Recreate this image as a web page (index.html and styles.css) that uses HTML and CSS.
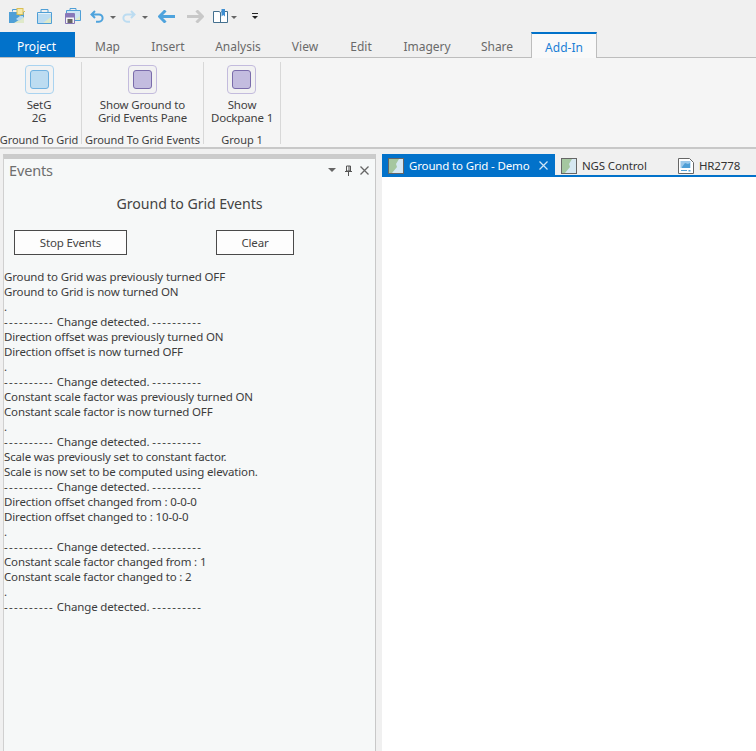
FILE: index.html
```html
<!DOCTYPE html>
<html lang="en">
<head>
<meta charset="utf-8">
<title>Ground to Grid Events</title>
<link rel="stylesheet" href="styles.css">
</head>
<body>
<div class="app">
  <div class="qat">
    <svg class="qi" width="16" height="16" viewBox="0 0 16 16"><path d="M3.500 3.500V1.500h5v2" fill="none" stroke="#4f9fd6"/><path d="M0 4h15v11H0z" fill="#4f9fd6"/><path d="M5 15l10-6v6z" fill="#dfe9c9"/><path d="M7 11l4-3 3 0v2l-4 3z" fill="#bcdcf1"/><rect x="8" y="0.500" width="6" height="6" fill="#f7e9a8" stroke="#d9bf55"/><path d="M14.500 3.500h1.500M11 7v1" stroke="#d9bf55"/></svg>
    <svg class="qi q2" width="15" height="15" viewBox="0 0 15 15"><path d="M4 3V.5h7V3" fill="none" stroke="#4f9fd6"/><path d="M.5 3.500h14v11H.5z" fill="#e8f2f8" stroke="#4f9fd6"/><path d="M1 5h13v4l-7 5H1z" fill="#bcdcf1"/><path d="M6 14l8-6v6z" fill="#dfe9c9"/></svg>
    <svg class="qi q3" width="16" height="16" viewBox="0 0 16 16"><path d="M5 2V.5h6V2" fill="none" stroke="#4f9fd6"/><path d="M1.500 2.500h14v10h-14z" fill="#cfe5f3" stroke="#4f9fd6"/><path d="M10 12l5-4v4z" fill="#dfe9c9"/><path d="M.5 5.500h9v10h-9z" fill="#f4f4f4" stroke="#8877b8"/><path d="M1 6h8v3.500H1z" fill="#8877b8"/><path d="M2.500 11h5v4h-5z" fill="#666"/></svg>
    <svg class="qi q4" width="15" height="13" viewBox="0 0 15 13"><path d="M5 1L1.500 4.500 5 8M2 4.500h7a3.600 3.600 0 0 1 0 7.200H6" fill="none" stroke="#4ea3dd" stroke-width="2"/></svg>
    <span class="caret q5"></span>
    <svg class="qi q6" width="15" height="13" viewBox="0 0 15 13"><path d="M10 1l3.500 3.500L10 8M13 4.500H6a3.600 3.600 0 0 0 0 7.200h3" fill="none" stroke="#bcdcf1" stroke-width="2"/></svg>
    <span class="caret q7"></span>
    <svg class="qi q8" width="17" height="13" viewBox="0 0 17 13"><path d="M7.500 .5L1.500 6.500l6 6M2 6.500h15" fill="none" stroke="#4ea3dd" stroke-width="3"/></svg>
    <svg class="qi q9" width="17" height="13" viewBox="0 0 17 13"><path d="M9.500 .5l6 6-6 6M15 6.500H0" fill="none" stroke="#c8c8c8" stroke-width="3"/></svg>
    <svg class="qi q10" width="15" height="14" viewBox="0 0 15 14"><path d="M.5 2.500h5.500l1.500 1 1.500-1h5.500v11H.5z" fill="#fff" stroke="#44708f"/><path d="M7.500 3.500v10" stroke="#44708f"/><path d="M8.500 0h3.500v7.500l-1.750-1.500-1.750 1.500z" fill="#3f8fd2"/></svg>
    <span class="caret q11"></span>
    <span class="more"></span>
  </div>

  <nav class="tabs">
    <span class="tab project">Project</span>
    <span class="tab t-map">Map</span>
    <span class="tab t-insert">Insert</span>
    <span class="tab t-analysis">Analysis</span>
    <span class="tab t-view">View</span>
    <span class="tab t-edit">Edit</span>
    <span class="tab t-imagery">Imagery</span>
    <span class="tab t-share">Share</span>
    <span class="tab addin">Add-In</span>
  </nav>

  <section class="ribbon">
    <div class="group g1">
      <div class="cmd">
        <span class="ico blue"><i></i></span>
        <span class="lbl">SetG<br>2G</span>
      </div>
      <div class="gname">Ground To Grid</div>
    </div>
    <div class="group g2">
      <div class="cmd">
        <span class="ico purple"><i></i></span>
        <span class="lbl">Show Ground to<br>Grid Events Pane</span>
      </div>
      <div class="gname">Ground To Grid Events</div>
    </div>
    <div class="group g3">
      <div class="cmd">
        <span class="ico purple"><i></i></span>
        <span class="lbl">Show<br>Dockpane 1</span>
      </div>
      <div class="gname">Group 1</div>
    </div>
  </section>

  <main class="workspace">
    <aside class="pane">
      <header class="pane-head">
        <span class="pane-title">Events</span>
        <span class="pane-tools">
          <span class="drop"></span>
          <svg width="9" height="11" viewBox="0 0 9 11"><path d="M2.500 1h4v5h-4zM1 6.500h7M4.500 6.500V11M5 1v5" fill="none" stroke="#555"/></svg>
          <svg width="9" height="9" viewBox="0 0 9 9"><path d="M.5.500l8 8M8.500.500l-8 8" stroke="#666" stroke-width="1.300"/></svg>
        </span>
      </header>
      <h1 class="heading">Ground to Grid Events</h1>
      <div class="actions">
        <button class="btn stop">Stop Events</button>
        <button class="btn clear">Clear</button>
      </div>
      <pre class="log">Ground to Grid was previously turned OFF
Ground to Grid is now turned ON
.
<span class="dash">----------</span> Change detected. <span class="dash">----------</span>
Direction offset was previously turned ON
Direction offset is now turned OFF
.
<span class="dash">----------</span> Change detected. <span class="dash">----------</span>
Constant scale factor was previously turned ON
Constant scale factor is now turned OFF
.
<span class="dash">----------</span> Change detected. <span class="dash">----------</span>
Scale was previously set to constant factor.
Scale is now set to be computed using elevation.
<span class="dash">----------</span> Change detected. <span class="dash">----------</span>
Direction offset changed from : 0-0-0
Direction offset changed to : 10-0-0
.
<span class="dash">----------</span> Change detected. <span class="dash">----------</span>
Constant scale factor changed from : 1
Constant scale factor changed to : 2
.
<span class="dash">----------</span> Change detected. <span class="dash">----------</span></pre>
    </aside>
    <section class="doc">
      <div class="doc-tabs">
        <span class="dtab active">
          <svg class="map" width="16" height="16" viewBox="0 0 16 16"><rect x=".5" y=".5" width="15" height="15" fill="#d6e8f2" stroke="#666"/><path d="M1 1h10L8 6l1 3-5 6H1z" fill="#a5c7a0"/></svg>
          <span class="dt-a">Ground to Grid - Demo</span>
          <svg class="dx" width="9" height="9" viewBox="0 0 9 9"><path d="M.5.500l8 8M8.500.500l-8 8" stroke="#cfe6f7" stroke-width="1.200"/></svg>
        </span>
        <span class="dtab second">
          <svg class="map" width="16" height="16" viewBox="0 0 16 16"><rect x=".5" y=".5" width="15" height="15" fill="#d6e8f2" stroke="#666"/><path d="M1 1h10L8 6l1 3-5 6H1z" fill="#a5c7a0"/></svg>
          <span>NGS Control</span>
        </span>
        <span class="dtab third">
          <svg class="map" width="16" height="16" viewBox="0 0 16 16"><path d="M.5.500h11l4 4v11H.5z" fill="#fff" stroke="#666"/><path d="M2.500 3h10v7h-10z" fill="#9cc9ea"/><path d="M4 9l3-4 3 1 2-1v5H4z" fill="#4f9fd6"/><path d="M3 12h6v1H3zM10.500 12h2v1.500h-2z" fill="#4f9fd6"/></svg>
          <span>HR2778</span>
        </span>
      </div>
      <div class="doc-body"></div>
    </section>
  </main>
</div>
</body>
</html>
```
FILE: styles.css
```css
* { box-sizing: border-box; }
html, body { margin: 0; height: 100%; }
body { background: #f0f0f0; font-family: "Noto Sans", "Open Sans", sans-serif; font-size: 11.5px; letter-spacing: -0.15px; color: #3c3c3c; overflow: hidden; }
.app { width: 756px; height: 751px; display: flex; flex-direction: column; }

.qat { height: 32px; display: flex; align-items: center; padding: 0 0 0 9px; flex: none; }
.qi { display: block; flex: none; }
.q2 { margin-left: 12px; }
.q3 { margin-left: 13px; }
.q4 { margin-left: 9px; }
.q5 { margin-left: 5px; }
.q6 { margin-left: 5px; }
.q7 { margin-left: 6px; }
.q8 { margin-left: 10px; }
.q9 { margin-left: 12px; }
.q10 { margin-left: 9px; }
.q11 { margin-left: 3px; }
.caret { width: 0; height: 0; border: 3px solid transparent; border-top: 3px solid #666; border-bottom: 0; flex: none; margin-top: 2px; }
.more { width: 6px; height: 6px; margin-left: 15px; border-top: 1px solid #222; position: relative; flex: none; }
.more::after { content: ""; position: absolute; left: 0; top: 2px; border: 3px solid transparent; border-top: 3px solid #222; border-bottom: 0; }

.tabs { height: 26px; display: flex; flex: none; border-bottom: 1px solid #bdbdbd; font-size: 12px; letter-spacing: 0; }
.tab { display: flex; align-items: center; justify-content: center; color: #6a6a6a; height: 25px; flex: none; padding-top: 3px; }
.project { width: 75px; background: #0272ca; color: #fff; padding-right: 2px; }
.t-map { width: 65px; }
.t-insert { width: 56px; }
.t-analysis { width: 78px; margin-left: 3px; }
.t-view { width: 48px; margin-left: 4px; }
.t-edit { width: 40px; margin-left: 12px; }
.t-imagery { width: 64px; margin-left: 14px; }
.t-share { width: 54px; margin-left: 11px; }
.addin { width: 66px; margin-left: 7px; height: 26px; background: #f9f9f9; color: #1b7fd6; border: 1px solid #bdbdbd; border-top: 2px solid #0272ca; border-bottom: 0; padding-top: 2px; }

.ribbon { height: 91px; flex: none; display: flex; background: #f5f5f5; border-bottom: 2px solid #c8c8c8; color: #3f3f3f; padding-top: 4px; }
.group { display: flex; flex-direction: column; align-items: center; border-right: 1px solid #d8d8d8; height: 82px; flex: none; }
.g1 { width: 82px; padding-right: 3px; }
.g2 { width: 122px; }
.g3 { width: 77px; }
.cmd { flex: none; height: 71px; display: flex; flex-direction: column; align-items: center; padding-top: 3px; }
.ico { width: 29px; height: 29px; border-radius: 4px; padding: 4px; display: block; background: #f2f2f2; }
.ico i { display: block; width: 19px; height: 19px; border-radius: 3px; }
.blue { border: 1px solid #a9d3f0; }
.blue i { background: #bcdcf1; border: 1px solid #6fb1e0; }
.purple { border: 1px solid #c3bbdd; }
.purple i { background: #c3bcdf; border: 1px solid #7a6cab; }
.lbl { display: block; text-align: center; line-height: 13px; margin-top: 4px; white-space: nowrap; }
.gname { height: 16px; line-height: 15px; white-space: nowrap; font-size: 11px; letter-spacing: -0.05px; margin-top: -1px; }

.workspace { flex: 1; display: flex; padding: 5px 0 0 3px; min-height: 0; background: #f0f0f0; }
.pane { width: 373px; background: #f6f8f8; border-top: 5px solid #cbcbcb; border-right: 1px solid #c8c8c8; border-left: 1px solid #d0d0d0; flex: none; color: #3c3c3c; }
.pane-head { height: 22px; display: flex; align-items: center; justify-content: space-between; padding: 0 6px 0 5px; }
.pane-title { font-size: 14.500px; color: #6e6e6e; }
.pane-tools { display: flex; align-items: center; gap: 7px; }
.drop { width: 0; height: 0; border: 4px solid transparent; border-top: 4px solid #666; border-bottom: 0; margin-right: 1px; }
.heading { font-size: 14.200px; font-weight: 400; text-align: center; margin: 13px 0 0; height: 26px; line-height: 20px; color: #444; letter-spacing: -0.1px; }
.actions { display: flex; padding: 0 0 0 10px; margin-top: 10px; }
.btn { font: inherit; letter-spacing: inherit; color: #444; background: #fdfdfd; border: 1px solid #4a4a4a; height: 25px; padding: 0; border-radius: 0; }
.stop { width: 113px; }
.clear { width: 78px; margin-left: 89px; }
.log { font: inherit; margin: 14px 0 0; line-height: 15px; color: #3c3c3c; white-space: pre; }
.dash { letter-spacing: 1.3px; }

.doc { flex: 1; margin-left: 6px; display: flex; flex-direction: column; min-width: 0; }
.doc-tabs { height: 23px; flex: none; display: flex; border-bottom: 2px solid #0272ca; font-size: 11.5px; color: #333; }
.dtab { display: flex; align-items: center; flex: none; height: 21px; padding-top: 2px; }
.active { width: 173px; background: #0272ca; color: #fff; padding-left: 6px; }
.dt-a { margin-left: 5px; white-space: nowrap; }
.dx { margin-left: 9px; }
.second { width: 123px; padding-left: 6px; }
.second span { margin-left: 5px; }
.third span { margin-left: 5px; }
.map { flex: none; }
.doc-body { flex: 1; background: #fff; }
```
